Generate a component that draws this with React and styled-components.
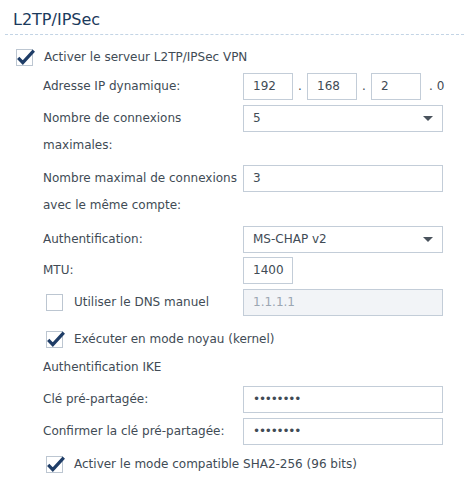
import React from 'react';
import styled, { createGlobalStyle } from 'styled-components';

const GlobalStyle = createGlobalStyle`
  body {
    margin: 0;
    background: #fff;
    font-family: "DejaVu Sans", Verdana, sans-serif;
    font-size: 12px;
    color: #414b55;
  }
`;

// Styled components
const Panel = styled.div`
  width: 464px;
  height: 478px;
  overflow: hidden;
  background: #fff;
`;

const Header = styled.div`
  margin-left: 5px;
  padding: 10px 0 4px 8px;
  font-size: 16px;
  line-height: 20px;
  color: #1b3a5c;
  border-bottom: 1px dashed #c3d4e5;
`;

const CheckRow = styled.label`
  display: flex;
  align-items: center;
  gap: 11px;
  height: ${(p) => p.$h || 17}px;
  margin-top: ${(p) => p.$mt || 0}px;
  padding-left: ${(p) => p.$indent || 0}px;
  width: ${(p) => (p.$w ? `${p.$w}px` : 'auto')};
  flex-shrink: 0;
  line-height: 17px;
  box-sizing: border-box;
`;

const Box = styled.span`
  position: relative;
  width: 17px;
  height: 17px;
  box-sizing: border-box;
  border: 1px solid #bcc6d1;
  background: #fff;
  flex-shrink: 0;
`;

const Tick = styled.svg`
  position: absolute;
  left: -1px;
  top: -1px;
  overflow: visible;
`;

const Fields = styled.div`
  padding-left: 43px;
`;

const Row = styled.div`
  display: flex;
  align-items: flex-start;
  margin-top: ${(p) => p.$mt || 0}px;
`;

const Label = styled.div`
  width: 200px;
  flex-shrink: 0;
  line-height: 27px;
  white-space: nowrap;
`;

const SubHeading = styled.div`
  line-height: 27px;
  margin-top: ${(p) => p.$mt || 0}px;
`;

const Input = styled.div`
  box-sizing: border-box;
  width: ${(p) => p.$w || 200}px;
  height: 27px;
  padding-left: 9px;
  border: 1px solid #c3cdd8;
  background: ${(p) => (p.$disabled ? '#f2f4f7' : '#fff')};
  color: ${(p) => (p.$disabled ? '#9ba6b2' : '#414b55')};
  line-height: 25px;
  white-space: nowrap;
`;

const Dots = styled.span`
  letter-spacing: -1.2px;
  font-size: 12px;
`;

const Select = styled(Input)`
  display: flex;
  align-items: center;
  justify-content: space-between;
  padding-right: 9px;
`;

const Arrow = styled.span`
  width: 0;
  height: 0;
  border-left: 5px solid transparent;
  border-right: 5px solid transparent;
  border-top: 5px solid #4a535d;
`;

const IpGroup = styled.div`
  display: flex;
  align-items: center;
`;

const IpSep = styled.span`
  width: 14px;
  text-align: center;
  line-height: 27px;
`;

const IpTail = styled.span`
  margin-left: 8px;
  line-height: 27px;
`;

const CheckBox = ({ checked }) => (
  <Box>
    {checked && (
      <Tick width="20" height="18" viewBox="0 0 20 18">
        <path
          d="M2.2 8.8 L6.8 13.6 L17.8 1.6"
          fill="none"
          stroke="#1f3d67"
          strokeWidth="3.2"
          strokeLinecap="butt"
          strokeLinejoin="miter"
        />
      </Tick>
    )}
  </Box>
);

const App = () => {
  return (
    <Panel>
      <GlobalStyle />
      <Header>L2TP/IPSec</Header>

      <CheckRow $mt={14} $indent={16}>
        <CheckBox checked />
        <span>Activer le serveur L2TP/IPSec VPN</span>
      </CheckRow>

      <Fields>
        <Row $mt={7}>
          <Label>Adresse IP dynamique:</Label>
          <IpGroup>
            <Input $w={50}>192</Input>
            <IpSep>.</IpSep>
            <Input $w={50}>168</Input>
            <IpSep>.</IpSep>
            <Input $w={50}>2</Input>
            <IpTail>. 0</IpTail>
          </IpGroup>
        </Row>

        <Row $mt={5}>
          <Label>
            Nombre de connexions
            <br />
            maximales:
          </Label>
          <Select>
            <span>5</span>
            <Arrow />
          </Select>
        </Row>

        <Row $mt={6}>
          <Label>
            Nombre maximal de connexions
            <br />
            avec le même compte:
          </Label>
          <Input>3</Input>
        </Row>

        <Row $mt={7}>
          <Label>Authentification:</Label>
          <Select>
            <span>MS-CHAP v2</span>
            <Arrow />
          </Select>
        </Row>

        <Row $mt={4}>
          <Label>MTU:</Label>
          <Input $w={50}>1400</Input>
        </Row>

        <Row $mt={5}>
          <CheckRow $h={27} $indent={3} $w={200}>
            <CheckBox />
            <span>Utiliser le DNS manuel</span>
          </CheckRow>
          <Input $disabled>1.1.1.1</Input>
        </Row>

        <CheckRow $h={27} $mt={10} $indent={3}>
          <CheckBox checked />
          <span>Exécuter en mode noyau (kernel)</span>
        </CheckRow>

        <SubHeading $mt={1}>Authentification IKE</SubHeading>

        <Row $mt={5}>
          <Label>Clé pré-partagée:</Label>
          <Input>
            <Dots>••••••••</Dots>
          </Input>
        </Row>

        <Row $mt={5}>
          <Label>Confirmer la clé pré-partagée:</Label>
          <Input>
            <Dots>••••••••</Dots>
          </Input>
        </Row>

        <CheckRow $h={27} $mt={6} $indent={3}>
          <CheckBox checked />
          <span>Activer le mode compatible SHA2-256 (96 bits)</span>
        </CheckRow>
      </Fields>
    </Panel>
  );
};

export default App;
